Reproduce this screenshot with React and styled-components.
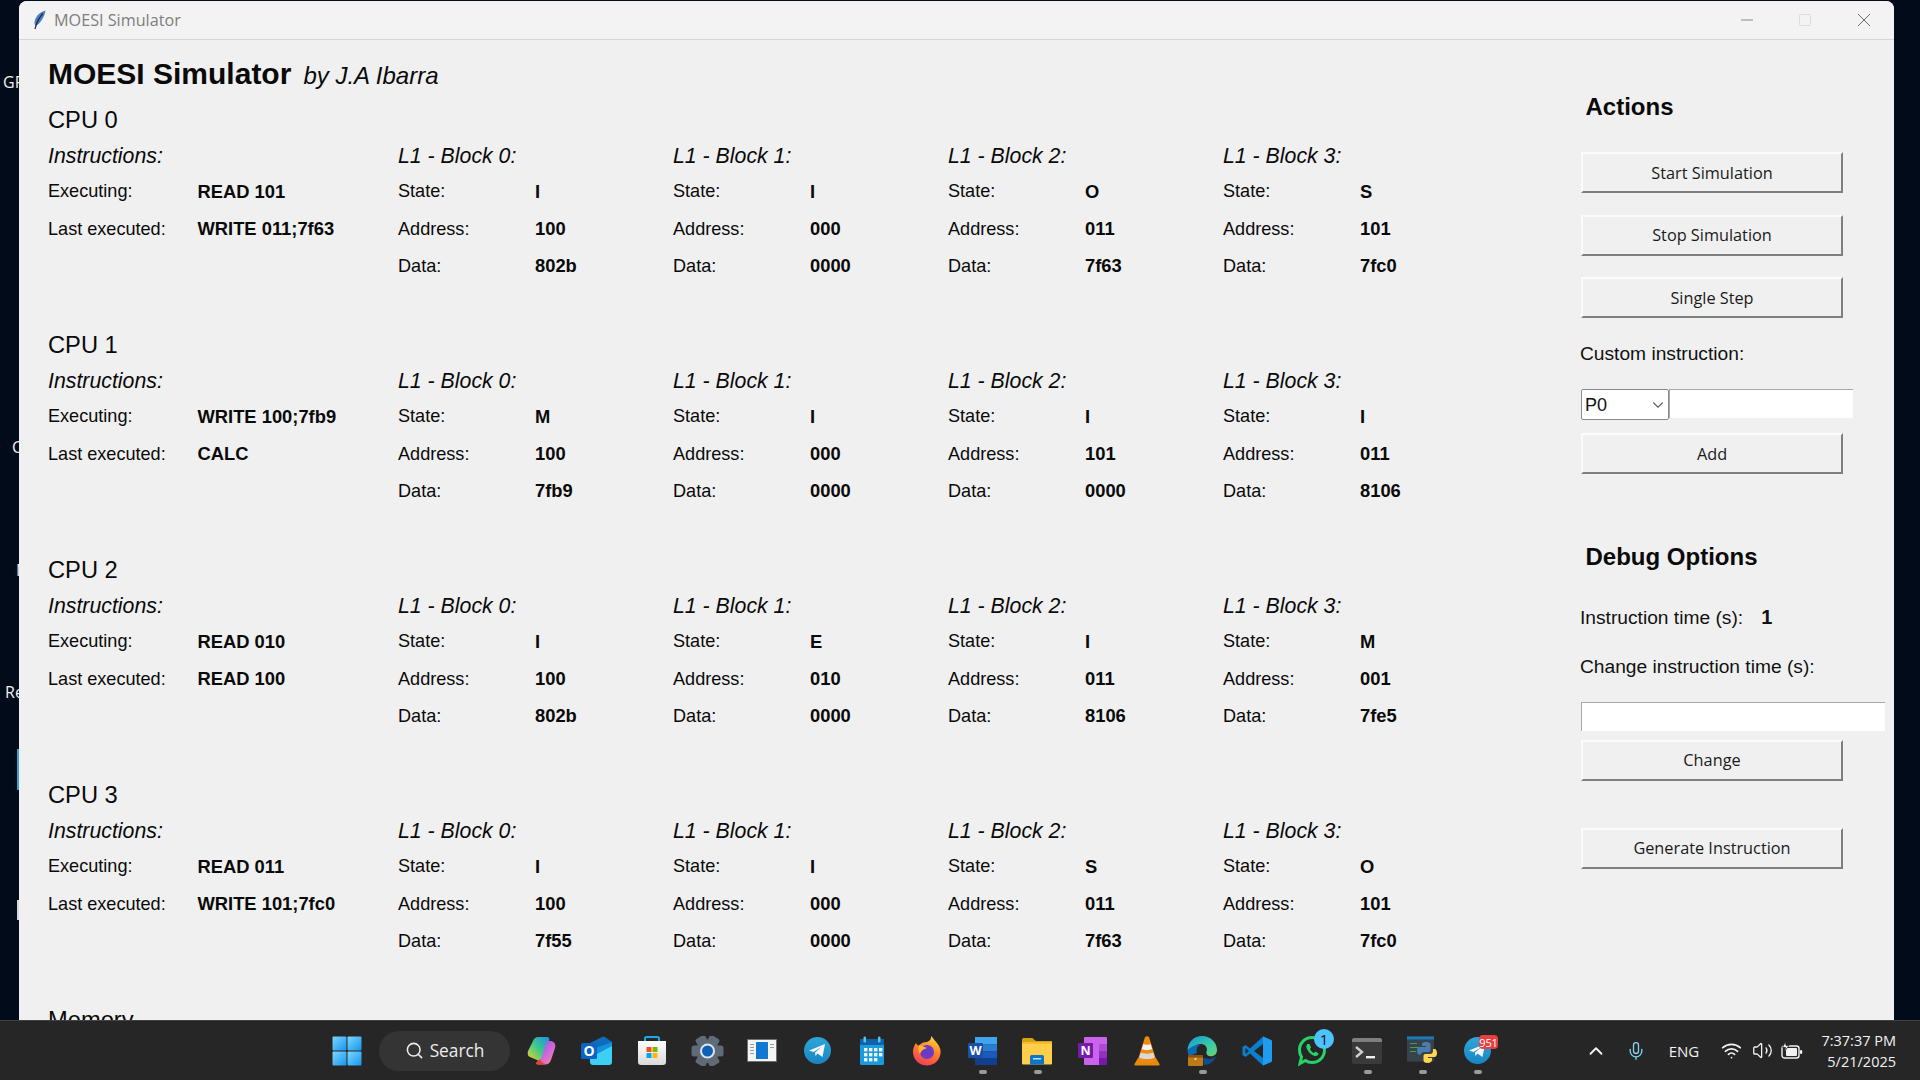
import React from 'react';
import styled, { createGlobalStyle } from 'styled-components';
import { ChevronDown, ChevronUp, Mic, Search, Wifi, Volume2 } from 'lucide-react';

const cpus = [
  {
    executing: 'READ 101',
    last: 'WRITE 011;7f63',
    blocks: [['I', '100', '802b'], ['I', '000', '0000'], ['O', '011', '7f63'], ['S', '101', '7fc0']],
  },
  {
    executing: 'WRITE 100;7fb9',
    last: 'CALC',
    blocks: [['M', '100', '7fb9'], ['I', '000', '0000'], ['I', '101', '0000'], ['I', '011', '8106']],
  },
  {
    executing: 'READ 010',
    last: 'READ 100',
    blocks: [['I', '100', '802b'], ['E', '010', '0000'], ['I', '011', '8106'], ['M', '001', '7fe5']],
  },
  {
    executing: 'READ 011',
    last: 'WRITE 101;7fc0',
    blocks: [['I', '100', '7f55'], ['I', '000', '0000'], ['S', '011', '7f63'], ['O', '101', '7fc0']],
  },
];

const GlobalStyle = createGlobalStyle`
  html, body { margin: 0; padding: 0; background: #020b1a; overflow: hidden; }
  * { box-sizing: border-box; }
`;

const Screen = styled.div`
  width: 1920px;
  height: 1080px;
  display: flex;
  flex-direction: column;
  overflow: hidden;
  position: relative;
  background: #020b1a;
`;

const Desktop = styled.div`
  flex: 1;
  min-height: 0;
  padding: 1px 26px 0 19px;
  position: relative;
`;

const DesktopLabel = styled.span`
  position: absolute;
  left: ${p => p.$x}px;
  top: ${p => p.$y}px;
  color: #f2f2f2;
  font: 16px "Open Sans", sans-serif;
  line-height: 20px;
`;

const DesktopMark = styled.span`
  position: absolute;
  left: 17px;
  top: ${p => p.$y}px;
  width: 2px;
  height: ${p => p.$h}px;
  background: ${p => p.$c};
`;

const Window = styled.div`
  position: relative;
  height: 100%;
  background: #f0f0f0;
  border-radius: 8px 8px 0 0;
  overflow: hidden;
  display: flex;
  flex-direction: column;
  color: #0a0a0a;
`;

const TitleBar = styled.div`
  height: 39px;
  flex: none;
  display: flex;
  align-items: center;
  padding-left: 14px;
  background: #f3f3f3;
  border-bottom: 1px solid #d6d6d6;
`;

const TitleText = styled.span`
  margin-left: 7px;
  font: 16.2px "Open Sans", sans-serif;
  color: #7d7d7d;
`;

const WinControls = styled.div`
  margin-left: auto;
  display: flex;
  padding-right: 1px;
`;

const WinControl = styled.div`
  width: 58.5px;
  display: flex;
  justify-content: center;
`;

const Body = styled.div`
  flex: 1;
  min-height: 0;
  display: flex;
  padding-left: 29px;
`;

const Main = styled.div`
  width: 1533px;
  flex: none;
  font-family: "Liberation Sans", Arial, sans-serif;
`;

const Title = styled.div`
  height: 60px;
  display: flex;
  align-items: baseline;
  padding-top: 16px;
  gap: 12px;
`;

const TitleMain = styled.span`
  font-size: 30px;
  font-weight: 700;
  line-height: 36px;
`;

const TitleBy = styled.span`
  font-size: 24px;
  font-style: italic;
`;

const Section = styled.section`
  height: 225px;
`;

const SectionTitle = styled.div`
  height: 38px;
  line-height: 40px;
  font-size: 23.7px;
`;

const SectionGrid = styled.div`
  display: grid;
  grid-template-columns: 350px repeat(4, 275px);
`;

const ColumnTitle = styled.div`
  height: 35px;
  line-height: 37px;
  font-size: 21.3px;
  font-style: italic;
`;

const Row = styled.div`
  height: 37.4px;
  display: flex;
  align-items: center;
`;

const Label = styled.span`
  width: ${p => p.$w}px;
  flex: none;
  font-size: 18.1px;
`;

const Value = styled.span`
  font-size: 18.35px;
  font-weight: 700;
`;

const Panel = styled.aside`
  width: 320px;
  flex: none;
  font-family: "Liberation Sans", Arial, sans-serif;
`;

const PanelTitle = styled.h2`
  margin: ${p => p.$top}px 0 ${p => p.$bottom}px 4.5px;
  font-size: 24px;
  font-weight: 700;
  line-height: 34px;
`;

const RaisedButton = styled.button`
  display: block;
  width: 262px;
  height: 41px;
  margin-bottom: ${p => p.$bottom || 0}px;
  background: #f0f0f0;
  border-style: solid;
  border-width: 2px;
  border-color: #fbfbfb #7f7f7f #7f7f7f #fbfbfb;
  font: 16.3px "Open Sans", sans-serif;
  color: #1a1a1a;
  padding: 0;
`;

const PanelLabel = styled.div`
  margin: ${p => p.$top || 0}px 0 ${p => p.$bottom || 0}px -1px;
  font-size: 19.2px;
  line-height: 28px;
  color: #111;
`;

const TimeValue = styled.span`
  margin-left: 18px;
  font-weight: 700;
  font-size: 20px;
`;

const InstructionRow = styled.div`
  display: flex;
  height: 30px;
  margin-bottom: 14px;
`;

const SelectWrap = styled.div`
  position: relative;
  width: 88px;
  height: 31px;
  flex: none;
  svg {
    position: absolute;
    right: 2px;
    top: 7px;
    pointer-events: none;
    color: #666;
  }
`;

const Select = styled.select`
  appearance: none;
  width: 100%;
  height: 100%;
  padding: 0 0 0 3px;
  background: #fff;
  border: 1px solid #8a8a8a;
  border-radius: 2px;
  font: 18px "Liberation Sans", Arial, sans-serif;
  color: #111;
`;

const TextInput = styled.input`
  width: ${p => p.$w}px;
  height: ${p => p.$h}px;
  margin-bottom: ${p => p.$bottom || 0}px;
  display: block;
  flex: none;
  background: #fff;
  border: none;
  border-top: 1px solid #a8a8a8;
  border-left: 1px solid #a8a8a8;
  outline: none;
`;

const Taskbar = styled.footer`
  height: 60px;
  flex: none;
  display: flex;
  align-items: center;
  padding-left: 319px;
  background: #262626;
  border-top: 1px solid #414141;
  position: relative;
`;

const AppSlot = styled.div`
  width: 55px;
  height: 100%;
  flex: none;
  display: flex;
  align-items: center;
  justify-content: center;
  position: relative;
  ${p => p.$running && `
    &::after {
      content: '';
      position: absolute;
      left: 24px;
      bottom: 6px;
      width: 8px;
      height: 4px;
      border-radius: 2px;
      background: #9b9b9b;
    }
  `}
`;

const SearchPill = styled.div`
  width: 131px;
  height: 40px;
  margin: 0 4.5px 0 5px;
  flex: none;
  display: flex;
  align-items: center;
  justify-content: center;
  gap: 6px;
  border-radius: 20px;
  background: #343434;
  color: #ededed;
  font: 17.3px "Open Sans", sans-serif;
`;

const Badge = styled.span`
  position: absolute;
  display: flex;
  align-items: center;
  justify-content: center;
  font-family: "Open Sans", sans-serif;
  ${p => p.$round
    ? `left: 29.5px; top: 8px; width: 20px; height: 20px; border-radius: 50%; background: #4cc2ff; color: #111; font-size: 15px;`
    : `left: 29.5px; top: 14px; width: 19px; height: 14px; border-radius: 4px; background: #e8403f; color: #fff; font-size: 11px; letter-spacing: -0.2px;`}
`;

const Tray = styled.div`
  position: absolute;
  left: 1584px;
  right: 24px;
  top: 0;
  bottom: 0;
  display: flex;
  align-items: center;
  color: #f2f2f2;
  font: 15px "Open Sans", sans-serif;
`;

const TrayItem = styled.div`
  width: ${p => p.$w}px;
  margin-left: ${p => p.$ml || 0}px;
  flex: none;
  display: flex;
  justify-content: center;
  color: ${p => p.$c || 'inherit'};
`;

const Clock = styled.div`
  margin-left: auto;
  text-align: right;
  font-size: 14.5px;
  line-height: 21px;
`;

const Feather = () => (
  <svg width="14" height="20" viewBox="0 0 14 20">
    <path d="M12.5 0.5 C7 2 2.5 6 1.5 12 C1.3 14 1.8 15.5 3 16 C7.5 13 11.5 7 12.5 0.5Z" fill="#4b7fc0" />
    <path d="M10 3.5 C6.5 7 4 11 2 19" stroke="#1c2c44" strokeWidth="1.2" fill="none" />
  </svg>
);

const WindowsIcon = () => (
  <svg width="30" height="30" viewBox="0 0 30 30">
    <defs>
      <linearGradient id="win" x1="0" y1="0" x2="1" y2="1">
        <stop offset="0" stopColor="#7fd6fc" />
        <stop offset="1" stopColor="#1596ee" />
      </linearGradient>
    </defs>
    <g fill="url(#win)">
      <rect x="0.5" y="0.5" width="14" height="14" rx="1" />
      <rect x="15.5" y="0.5" width="14" height="14" rx="1" />
      <rect x="0.5" y="15.5" width="14" height="14" rx="1" />
      <rect x="15.5" y="15.5" width="14" height="14" rx="1" />
    </g>
  </svg>
);

const CopilotIcon = () => (
  <svg width="30" height="30" viewBox="0 0 30 30">
    <defs>
      <linearGradient id="copA" x1="0" y1="1" x2="1" y2="0">
        <stop offset="0" stopColor="#f5d327" />
        <stop offset="0.5" stopColor="#3fc98a" />
        <stop offset="1" stopColor="#1b8fe8" />
      </linearGradient>
      <linearGradient id="copB" x1="0" y1="0" x2="1" y2="1">
        <stop offset="0" stopColor="#7a4ee8" />
        <stop offset="0.6" stopColor="#d86ad8" />
        <stop offset="1" stopColor="#f59a6a" />
      </linearGradient>
    </defs>
    <path d="M11 1 H20 C22 1 23 3 22 5 L16 23 C15 26 13 26 10 24 L3 21 C0.5 20 0.5 17 1 15 L6 5 C7 2.5 9 1 11 1Z" fill="url(#copA)" />
    <path d="M20 5 H24 C28 6 29 9 28 12 L24 24 C23 27 21 28.5 18 28.5 H11 C9 28.5 8.5 27 10 26 C13 25 14 23 15 20 L19 8 C19.5 6 19.5 5.5 20 5Z" fill="url(#copB)" />
    <path d="M13 23 C14 27 18 27 18 28.5 H11 C9 28 9 26 13 23Z" fill="#e8452e" />
  </svg>
);

const OutlookIcon = () => (
  <svg width="32" height="30" viewBox="0 0 32 30">
    <path d="M9 7 L21 1 C22 0.5 23 0.5 24 1 L31 6 V12 L9 20Z" fill="#0f6cbd" />
    <path d="M9 14 L31 8 V26 C31 28 30 29 28 29 H12 C10 29 9 28 9 26Z" fill="#3cd0f5" />
    <path d="M9 14 L31 6 V10 L16 18 L9 19Z" fill="#1490df" />
    <rect x="0" y="7" width="16" height="16" rx="1.5" fill="#0b63c5" />
    <text x="8" y="20" textAnchor="middle" fontSize="14" fontWeight="700" fill="#fff" fontFamily="Open Sans, sans-serif">O</text>
  </svg>
);

const StoreIcon = () => (
  <svg width="30" height="30" viewBox="0 0 30 30">
    <defs>
      <linearGradient id="bag" x1="0" y1="0" x2="0" y2="1">
        <stop offset="0" stopColor="#ffffff" />
        <stop offset="1" stopColor="#d9d9d9" />
      </linearGradient>
    </defs>
    <path d="M8 7 V2.5 C8 1.5 8.5 1 9.5 1 H20.5 C21.5 1 22 1.5 22 2.5 V7" stroke="#18a9e8" strokeWidth="2" fill="none" />
    <path d="M1 5 H29 V26 C29 28 28 29 26 29 H4 C2 29 1 28 1 26Z" fill="url(#bag)" />
    <rect x="9.5" y="11" width="5" height="5" fill="#f25022" />
    <rect x="15.5" y="11" width="5" height="5" fill="#7fba00" />
    <rect x="9.5" y="17" width="5" height="5" fill="#00a4ef" />
    <rect x="15.5" y="17" width="5" height="5" fill="#ffb900" />
  </svg>
);

const SettingsIcon = () => (
  <svg width="33" height="30" viewBox="-0.5 0 33 30">
    <g fill="#5f6b76">
      {[30, 90, 150, 210, 270, 330].map(a => (
        <rect key={a} x="10.5" y="-1" width="11" height="9" rx="2.5" transform={`rotate(${a} 16 15)`} />
      ))}
    </g>
    <circle cx="16" cy="15" r="11.5" fill="#5f6b76" />
    <circle cx="16" cy="15" r="7.5" fill="#dfe6ee" />
    <circle cx="16" cy="15" r="5.5" fill="#0f5fb5" />
  </svg>
);

const ThreeColIcon = () => (
  <svg width="30" height="24" viewBox="0 0 30 24">
    <rect x="0.5" y="0.5" width="29" height="22" fill="#f4f4f4" stroke="#6f6f6f" />
    <rect x="9" y="3" width="12" height="17" rx="0.5" fill="#0f78d0" />
    <g fill="#9c9c9c">
      <rect x="3" y="5" width="4" height="1" />
      <rect x="3" y="8" width="4" height="1" />
      <rect x="3" y="11" width="4" height="1" />
      <rect x="3" y="14" width="4" height="1" />
      <rect x="23" y="5" width="4" height="1" />
      <rect x="23" y="8" width="4" height="1" />
    </g>
  </svg>
);

const TelegramIcon = () => (
  <svg width="27" height="27" viewBox="0 0 27 27">
    <defs>
      <linearGradient id="tg" x1="0.5" y1="0" x2="0.5" y2="1">
        <stop offset="0" stopColor="#2ea6da" />
        <stop offset="1" stopColor="#1985c2" />
      </linearGradient>
    </defs>
    <circle cx="13.5" cy="13.5" r="13.5" fill="url(#tg)" />
    <path d="M5 13.5 L21 7 L18.5 20 L13.5 16.5 L11.5 19 L11 15.5 L17.5 10 L9.5 15Z" fill="#f4f8fb" />
  </svg>
);

const CalendarIcon = () => (
  <svg width="26" height="30" viewBox="0 0 26 30">
    <rect x="1" y="3" width="24" height="26" rx="1.5" fill="#1c9ade" />
    <path d="M1 4.5 C1 3.5 2 3 3 3 H23 C24 3 25 3.5 25 4.5 V9 H1Z" fill="#0f62a8" />
    <rect x="4.5" y="0.5" width="2.5" height="6" rx="1.2" fill="#59c4ee" />
    <rect x="19" y="0.5" width="2.5" height="6" rx="1.2" fill="#59c4ee" />
    <g fill="#eaf6fc">
      {[12, 17, 22].map(y => [5, 10, 15, 20].map(x => (y === 22 && x === 20 ? null : <rect key={`${x}-${y}`} x={x} y={y} width="3.4" height="3.4" />)))}
    </g>
  </svg>
);

const FirefoxIcon = () => (
  <svg width="28" height="30" viewBox="0 0 28 30">
    <defs>
      <linearGradient id="ffx" x1="0.7" y1="0" x2="0.3" y2="1">
        <stop offset="0" stopColor="#ffd43a" />
        <stop offset="0.5" stopColor="#ff7a2b" />
        <stop offset="1" stopColor="#f23a5c" />
      </linearGradient>
    </defs>
    <path d="M18 0 C21 3 22 5 24 7 C27 11 28 14 27.5 17 C27 24 21 29.5 14 29.5 C6 29.5 0 23.5 0 16 C0 12 1.5 9 3 7 C4 9 5 9.5 6 9.5 C8 7 11 6 14 6 C17 5 18.5 3 18 0Z" fill="url(#ffx)" />
    <circle cx="14" cy="16" r="7" fill="#6b3bc4" />
    <path d="M6 9 C10 10 11 11 14 12 C10 13 8 15 7 18 C5 15 5 12 6 9Z" fill="#ffb52e" />
  </svg>
);

const WordIcon = () => (
  <svg width="29" height="30" viewBox="0 0 29 30">
    <rect x="7" y="1" width="22" height="7.5" fill="#41a5ee" />
    <rect x="7" y="8.5" width="22" height="7" fill="#2b7cd3" />
    <rect x="7" y="15.5" width="22" height="7" fill="#185abd" />
    <rect x="7" y="22.5" width="22" height="6.5" fill="#103f91" />
    <rect x="0" y="7" width="15" height="15" rx="1" fill="#1a4fa8" />
    <text x="7.5" y="19" textAnchor="middle" fontSize="12.5" fontWeight="700" fill="#fff" fontFamily="Open Sans, sans-serif">W</text>
  </svg>
);

const FolderIcon = () => (
  <svg width="30" height="28" viewBox="0 0 30 28">
    <path d="M0 3 C0 1.5 1 1 2 1 H10 C11 1 12 3 14 4 H30 V12 H0Z" fill="#d5a30f" />
    <rect x="0" y="5" width="30" height="22.5" rx="1" fill="#ffce4a" />
    <rect x="0" y="5" width="30" height="2" fill="#f2bd35" />
    <path d="M8 19.5 C8 18.5 9 18 10 18 H20 C21 18 22 18.5 22 19.5 V27.5 H8Z" fill="#0f75c6" />
    <rect x="11" y="21" width="8" height="1.5" fill="#bfe1f8" />
  </svg>
);

const OneNoteIcon = () => (
  <svg width="29" height="30" viewBox="0 0 29 30">
    <rect x="6" y="1" width="23" height="28" rx="1" fill="#ca64ea" />
    <rect x="21" y="8" width="8" height="7" fill="#ae4bd5" />
    <rect x="21" y="15" width="8" height="7" fill="#9332bf" />
    <rect x="21" y="22" width="8" height="7" fill="#7719aa" />
    <rect x="0" y="7" width="15" height="15" rx="1" fill="#7719aa" />
    <text x="7.5" y="19" textAnchor="middle" fontSize="12.5" fontWeight="700" fill="#fff" fontFamily="Open Sans, sans-serif">N</text>
  </svg>
);

const VlcIcon = () => (
  <svg width="26" height="30" viewBox="0 0 26 30">
    <path d="M4 22 H22 L25.5 28 C26 29 25 29.5 24 29.5 H2 C1 29.5 0 29 0.5 28Z" fill="#e58a0b" />
    <path d="M11 1 C12 0 14 0 15 1 L22.5 25 C20 27 6 27 3.5 25Z" fill="#f08a10" />
    <path d="M9.4 8 C11 9 15 9 16.6 8 L18.2 13 C16 14.5 10 14.5 7.8 13Z" fill="#f2f2f2" />
    <path d="M6.8 16.5 C9 18 17 18 19.2 16.5 L20.8 21.5 C17 23.5 9 23.5 5.2 21.5Z" fill="#d9d9d9" />
  </svg>
);

const EdgeIcon = () => (
  <svg width="30" height="30" viewBox="0 0 30 30">
    <defs>
      <linearGradient id="edge" x1="0" y1="0" x2="1" y2="1">
        <stop offset="0" stopColor="#0f9bd7" />
        <stop offset="0.6" stopColor="#3bc9a8" />
        <stop offset="1" stopColor="#6fd36d" />
      </linearGradient>
    </defs>
    <path d="M0.5 14 C1 6 7 0 15 0 C24 0 30 7 30 14 C30 19 26 21 22 20 C19 19 19 16 20 14 C20 10 17 8 14 8 C8 8 4 13 0.5 14Z" fill="url(#edge)" />
    <path d="M0.5 14 C4 11 9 8 13 9 C10 10 9 13 10 17 L2 20 C1 18 0.5 16 0.5 14Z" fill="#0c6bb5" />
    <path d="M16 22 C20 23 25 24 29 20 C27 26 22 29 17 29Z" fill="#0d4f96" />
    <rect x="1" y="19" width="15" height="11" rx="1" fill="#bf7a16" />
    <rect x="1" y="19" width="15" height="2.5" fill="#8f5310" />
    <rect x="7.5" y="22" width="2" height="2" fill="#f4d58a" />
  </svg>
);

const VscodeIcon = () => (
  <svg width="30" height="30" viewBox="0 0 30 30">
    <path d="M21 0.5 L29 4 C29.6 4.3 30 5 30 5.7 V24.3 C30 25 29.6 25.7 29 26 L21 29.5 L8 17.5 L3.5 21 L0.5 19 V11 L3.5 9 L8 12.5Z" fill="#0a7fcc" />
    <path d="M21 0.5 L29 4 C29.6 4.3 30 5 30 5.7 V24.3 C30 25 29.6 25.7 29 26 L21 29.5Z" fill="#1f9cf0" />
    <path d="M21 8 L12 15 L21 22Z" fill="#262626" />
    <path d="M3.5 12 L7 15 L3.5 18Z" fill="#262626" />
  </svg>
);

const WhatsappIcon = () => (
  <svg width="30" height="31" viewBox="0 0 30 31">
    <path d="M15 2.5 C22 2.5 27.5 8 27.5 15 C27.5 22 22 27.5 15 27.5 C12.5 27.5 10.5 27 8.5 25.5 L3 28.5 L4.5 22 C3 20 2.5 17.5 2.5 15 C2.5 8 8 2.5 15 2.5Z" fill="none" stroke="#25d366" strokeWidth="3" />
    <path d="M10.5 9 C9 10 9 12.5 10.5 15 C12.5 18.5 16 21 18.5 21 C20.5 21 21.5 19.5 21.5 18.5 L18.5 16.5 L17 18 C15.5 17.5 13.5 15.5 13 14 L14 12.5 L12.5 9Z" fill="#25d366" />
  </svg>
);

const TerminalIcon = () => (
  <svg width="30" height="26" viewBox="0 0 30 26">
    <rect x="0" y="0" width="30" height="26" rx="2" fill="#3a3a3a" />
    <path d="M0 2 C0 1 1 0 2 0 H28 C29 0 30 1 30 2 V4 H0Z" fill="#7f7f7f" />
    <path d="M4 9 L10 14 L4 19" stroke="#cfcfcf" strokeWidth="2.4" fill="none" />
    <rect x="14" y="18" width="9" height="2.4" fill="#f0f0f0" />
  </svg>
);

const PythonIcon = () => (
  <svg width="30" height="30" viewBox="0 0 30 30">
    <rect x="0" y="0.5" width="27" height="25" fill="#37424c" />
    <rect x="0" y="0.5" width="27" height="3" fill="#1b79b8" />
    <g fill="#3ea34e">
      <rect x="3" y="7" width="7" height="1" />
      <rect x="3" y="11" width="10" height="1" />
      <rect x="3" y="15" width="6" height="1" />
    </g>
    <path d="M15 8 C15 6.5 17 6 19.5 6 C22 6 23.5 7 23.5 8.5 V14 C23.5 15.5 22.5 16 21 16 H17 C14.5 16 14 17.5 14 18.5 H12 C10.5 18.5 10 16.5 10 14.5 C10 12 11 11 12.5 11 H19 V10 H15Z" fill="#4a7eaa" />
    <path d="M28.5 13 C29.5 14.5 30 15.5 30 17 C30 19.5 29 21 27.5 21 H21 V22 H25 V24 C25 26 23 27 20.5 27 C18 27 16.5 26 16.5 24.5 V20 C16.5 18.5 17.5 18 19 18 H23 C25.5 18 26 16.5 26 14 V13Z" fill="#ffd650" />
  </svg>
);

const BatteryIcon = () => (
  <svg width="22" height="20" viewBox="0 0 22 20">
    <rect x="1" y="5" width="17" height="12" rx="2.5" fill="none" stroke="#f2f2f2" strokeWidth="1.4" />
    <rect x="5" y="7" width="11" height="8" rx="1" fill="#f2f2f2" />
    <rect x="19" y="9" width="2.2" height="4" rx="1" fill="#f2f2f2" />
    <path d="M4.5 0.5 L1.5 6.5 H4.5 L3 11 L8 4.5 H5Z" fill="#f2f2f2" stroke="#262626" strokeWidth="0.8" />
  </svg>
);

const apps = [
  { icon: <CopilotIcon /> },
  { icon: <OutlookIcon /> },
  { icon: <StoreIcon /> },
  { icon: <SettingsIcon /> },
  { icon: <ThreeColIcon /> },
  { icon: <TelegramIcon /> },
  { icon: <CalendarIcon /> },
  { icon: <FirefoxIcon /> },
  { icon: <WordIcon />, running: true },
  { icon: <FolderIcon />, running: true },
  { icon: <OneNoteIcon /> },
  { icon: <VlcIcon /> },
  { icon: <EdgeIcon />, running: true },
  { icon: <VscodeIcon /> },
  { icon: <WhatsappIcon />, badge: '1', round: true },
  { icon: <TerminalIcon />, running: true },
  { icon: <PythonIcon />, running: true },
  { icon: <TelegramIcon />, running: true, badge: '951' },
];

function Cpu({ index, cpu }) {
  return (
    <Section>
      <SectionTitle>CPU {index}</SectionTitle>
      <SectionGrid>
        <div>
          <ColumnTitle>Instructions:</ColumnTitle>
          <Row><Label $w={149.5}>Executing:</Label><Value>{cpu.executing}</Value></Row>
          <Row><Label $w={149.5}>Last executed:</Label><Value>{cpu.last}</Value></Row>
        </div>
        {cpu.blocks.map((block, i) => (
          <div key={i}>
            <ColumnTitle>L1 - Block {i}:</ColumnTitle>
            <Row><Label $w={137}>State:</Label><Value>{block[0]}</Value></Row>
            <Row><Label $w={137}>Address:</Label><Value>{block[1]}</Value></Row>
            <Row><Label $w={137}>Data:</Label><Value>{block[2]}</Value></Row>
          </div>
        ))}
      </SectionGrid>
    </Section>
  );
}

export default function App() {
  return (
    <Screen>
      <GlobalStyle />
      <Desktop>
        <DesktopLabel $x={3} $y={72}>GPU</DesktopLabel>
        <DesktopLabel $x={12} $y={437}>C</DesktopLabel>
        <DesktopLabel $x={16} $y={560}>M</DesktopLabel>
        <DesktopLabel $x={5} $y={682}>Re</DesktopLabel>
        <DesktopMark $y={749} $h={41} $c="#3aa0d0" />
        <DesktopMark $y={900} $h={20} $c="#d8d8d8" />
        <Window>
          <TitleBar>
            <Feather />
            <TitleText>MOESI Simulator</TitleText>
            <WinControls>
              <WinControl>
                <svg width="14" height="14" viewBox="0 0 14 14"><path d="M1 7h12" stroke="#8a8a8a" strokeWidth="1" /></svg>
              </WinControl>
              <WinControl>
                <svg width="14" height="14" viewBox="0 0 14 14"><rect x="1.5" y="1.5" width="11" height="11" rx="1" fill="none" stroke="#dcdcdc" /></svg>
              </WinControl>
              <WinControl>
                <svg width="14" height="14" viewBox="0 0 14 14"><path d="M1 1l12 12M13 1L1 13" stroke="#6e6e6e" strokeWidth="1" /></svg>
              </WinControl>
            </WinControls>
          </TitleBar>
          <Body>
            <Main>
              <Title>
                <TitleMain>MOESI Simulator</TitleMain>
                <TitleBy>by J.A Ibarra</TitleBy>
              </Title>
              {cpus.map((cpu, i) => <Cpu key={i} index={i} cpu={cpu} />)}
              <SectionTitle>Memory</SectionTitle>
            </Main>
            <Panel>
              <PanelTitle $top={50} $bottom={28}>Actions</PanelTitle>
              <RaisedButton $bottom={21.5}>Start Simulation</RaisedButton>
              <RaisedButton $bottom={21.5}>Stop Simulation</RaisedButton>
              <RaisedButton>Single Step</RaisedButton>
              <PanelLabel $top={22} $bottom={21}>Custom instruction:</PanelLabel>
              <InstructionRow>
                <SelectWrap>
                  <Select defaultValue="P0">
                    <option>P0</option>
                    <option>P1</option>
                    <option>P2</option>
                    <option>P3</option>
                  </Select>
                  <ChevronDown size={18} strokeWidth={1.5} />
                </SelectWrap>
                <TextInput $w={184} $h={29} />
              </InstructionRow>
              <RaisedButton>Add</RaisedButton>
              <PanelTitle $top={66} $bottom={29}>Debug Options</PanelTitle>
              <PanelLabel $bottom={21}>Instruction time (s):<TimeValue>1</TimeValue></PanelLabel>
              <PanelLabel $bottom={21}>Change instruction time (s):</PanelLabel>
              <TextInput $w={304} $h={29} $bottom={8.5} />
              <RaisedButton $bottom={47}>Change</RaisedButton>
              <RaisedButton>Generate Instruction</RaisedButton>
            </Panel>
          </Body>
        </Window>
      </Desktop>
      <Taskbar>
        <AppSlot><WindowsIcon /></AppSlot>
        <SearchPill><Search size={19} strokeWidth={2} />Search</SearchPill>
        {apps.map((app, i) => (
          <AppSlot key={i} $running={app.running}>
            {app.icon}
            {app.badge && <Badge $round={app.round}>{app.badge}</Badge>}
          </AppSlot>
        ))}
        <Tray>
          <TrayItem $w={24}><ChevronUp size={22} strokeWidth={2} /></TrayItem>
          <TrayItem $w={56} $c="#7fd3f0"><Mic size={20} strokeWidth={1.6} /></TrayItem>
          <TrayItem $w={40}>ENG</TrayItem>
          <TrayItem $w={32} $ml={11}><Wifi size={21} strokeWidth={2} /></TrayItem>
          <TrayItem $w={30}><Volume2 size={21} strokeWidth={1.5} /></TrayItem>
          <TrayItem $w={30}><BatteryIcon /></TrayItem>
          <Clock>7:37:37 PM<br />5/21/2025</Clock>
        </Tray>
      </Taskbar>
    </Screen>
  );
}
